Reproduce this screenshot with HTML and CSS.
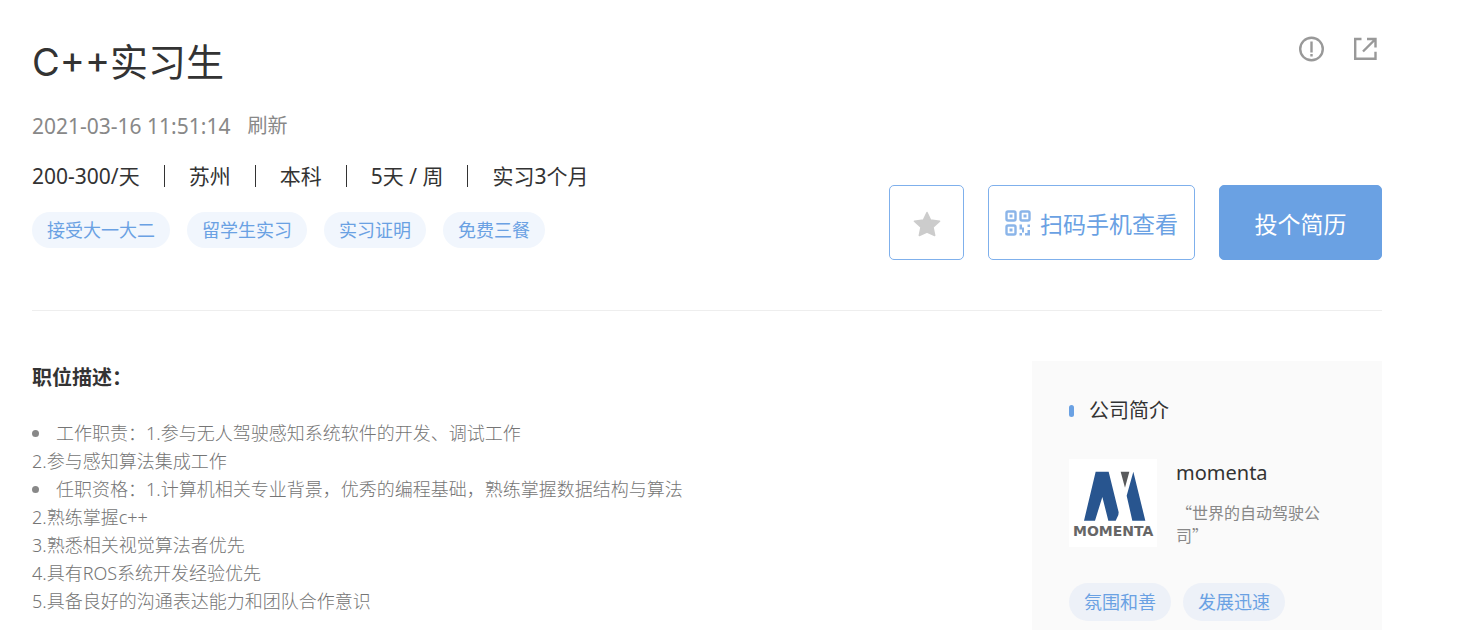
FILE: index.html
```html
<!DOCTYPE html>
<html lang="zh-CN">
<head>
	<meta charset="utf-8">
	<title>C++实习生</title>
	<link rel="stylesheet" href="styles.css">
</head>
<body>
<div class="job">
	<header class="job-header">
		<div class="job-info">
			<h1>C++实习生</h1>
			<div class="job-date"><time>2021-03-16 11:51:14</time><span>刷新</span></div>
			<ul class="job-msg">
				<li>200-300/天</li>
				<li>苏州</li>
				<li>本科</li>
				<li>5天 / 周</li>
				<li>实习3个月</li>
			</ul>
			<ul class="tags">
				<li>接受大一大二</li>
				<li>留学生实习</li>
				<li>实习证明</li>
				<li>免费三餐</li>
			</ul>
		</div>
		<div class="job-side">
			<div class="job-tools">
				<button type="button" class="icon-btn" aria-label="举报">
					<svg width="26" height="26" viewBox="0 0 26 26" fill="none" stroke="#999" stroke-width="2.400">
						<circle cx="13.500" cy="13" r="11.300"/>
						<path d="M13.500 5.500v11M13.500 18v2.500"/>
					</svg>
				</button>
				<button type="button" class="icon-btn" aria-label="分享">
					<svg width="26" height="26" viewBox="0 0 26 26" fill="none" stroke="#999" stroke-width="2.400">
						<path d="M9.500 3H3.200v19.800h20.300v-7M15 3h8.500v8.500M23 3.500L11 15.500"/>
					</svg>
				</button>
			</div>
			<div class="job-actions">
				<button type="button" class="btn btn-star" aria-label="收藏">
					<svg width="28" height="28" viewBox="0 0 28 28" fill="#ccc" stroke="#ccc" stroke-width="1.5" stroke-linejoin="round">
						<path d="M14 3.500l3.600 7.500 9 1.200-6.600 6 1.700 8.300L14 23l-7.700 3.500 1.700-8.300-6.600-6 9-1.200z"/>
					</svg>
				</button>
				<button type="button" class="btn btn-scan">
					<svg width="26" height="26" viewBox="0 0 26 26" fill="#8bb5e9">
						<g fill="none" stroke="#8bb5e9" stroke-width="2.400">
							<rect x="1.500" y="1.500" width="9" height="9" rx="1.500"/>
							<rect x="15.500" y="1.500" width="9" height="9" rx="1.500"/>
							<rect x="1.500" y="15.500" width="9" height="9" rx="1.500"/>
						</g>
						<path d="M4.500 4.500h3v3h-3zM18.500 4.500h3v3h-3zM4.500 18.500h3v3h-3z"/>
						<path d="M14.500 14.500h2.500v3h2v5h-2v-3h-2.500zM22.500 14.500H25V17h-2.500zM14.500 23H17v2.500h-2.500zM22.500 20H25v5.500h-5V23h2.500z"/>
					</svg>
					<span>扫码手机查看</span>
				</button>
				<button type="button" class="btn btn-apply">投个简历</button>
			</div>
		</div>
	</header>

	<main class="job-main">
		<section class="job-detail">
			<h2>职位描述：</h2>
			<ul>
				<li>工作职责：1.参与无人驾驶感知系统软件的开发、调试工作<br>2.参与感知算法集成工作</li>
				<li>任职资格：1.计算机相关专业背景，优秀的编程基础，熟练掌握数据结构与算法<br>2.熟练掌握c++<br>3.熟悉相关视觉算法者优先<br>4.具有ROS系统开发经验优先<br>5.具备良好的沟通表达能力和团队合作意识</li>
			</ul>
		</section>

		<aside class="company">
			<h2>公司简介</h2>
			<div class="company-card">
				<svg class="company-logo" viewBox="0 0 264 264" role="img" aria-label="momenta">
					<rect width="264" height="264" fill="#fff"/>
					<path fill="#28558f" d="M80 38h39l30 122-1 8-8 17h-22l-18-71-22 71H45zM193 38l36 147h-39l-17-75z"/>
					<path fill="#58595b" d="M155 38h26l-13 48z"/>
					<text x="12" y="230">MOMENTA</text>
				</svg>
				<div class="company-text">
					<a href="#">momenta</a>
					<p>“世界的自动驾驶公司”</p>
				</div>
			</div>
			<ul class="tags">
				<li>氛围和善</li>
				<li>发展迅速</li>
			</ul>
		</aside>
	</main>
</div>
</body>
</html>
```
FILE: styles.css
```css
*{margin: 0;padding: 0;box-sizing: border-box;}
body{font-family: "Noto Sans","Noto Sans CJK SC",sans-serif;color: #333;background: #fff;}
ul{list-style: none;}
button{font-family: inherit;cursor: pointer;}
a{color: inherit;text-decoration: none;}

.job{padding: 32px 87px 0 32px;}

/* header */
.job-header{display: flex;justify-content: space-between;padding-bottom: 50px;border-bottom: 1px solid #eee;}
.job-info{padding-bottom: 12px;}
.job-info h1{font-family: Inter,"Noto Sans CJK SC",sans-serif;font-size: 38px;line-height: 60px;font-weight: 400;}
.job-date{display: flex;gap: 17px;margin-top: 19px;font-size: 21px;line-height: 30px;color: #888;}
.job-date span{font-size: 20px;}
.job-msg{display: flex;align-items: center;gap: 24px;margin-top: 20px;font-size: 21px;line-height: 30px;}
.job-msg li{display: flex;align-items: center;gap: 24px;}
.job-msg li + li::before{content: "";width: 1px;height: 22px;background: #333;}
.job-info .tags{margin-top: 21px;}

.tags{display: flex;gap: 17px;}
.tags li{padding: 0 15px;border-radius: 20px;font-size: 18px;line-height: 36px;color: #6aa1e3;background: #f1f6fd;}

.job-side{display: flex;flex-direction: column;justify-content: space-between;align-items: flex-end;}
.job-tools{display: flex;gap: 28px;padding: 4px 4px 0 0;}
.icon-btn{border: 0;background: none;}
.icon-btn svg{display: block;}
.job-actions{display: flex;gap: 24px;}
.btn{display: flex;align-items: center;justify-content: center;height: 75px;border: 1px solid #7fb0ec;border-radius: 5px;font-size: 23px;color: #6aa1e3;background: #fff;}
.btn-star{width: 75px;}
.btn-scan{width: 207px;gap: 9px;}
.btn-apply{width: 163px;border-color: #6aa1e3;color: #fff;background: #6aa1e3;}

/* description */
.job-main{display: flex;justify-content: space-between;align-items: flex-start;padding-top: 50px;}
.job-detail h2{font-size: 20px;line-height: 34px;}
.job-detail ul{margin-top: 24px;font-size: 18px;line-height: 28px;font-weight: 300;color: #757575;}
.job-detail li::before{content: "";display: inline-block;width: 7px;height: 7px;margin-right: 17px;border-radius: 50%;background: #888;vertical-align: 3px;}

/* company */
.company{width: 350px;padding: 35px 37px 9px;background: #fafafa;}
.company h2{display: flex;align-items: center;gap: 15px;font-size: 20px;line-height: 30px;font-weight: 400;}
.company h2::before{content: "";width: 5px;height: 12px;border-radius: 3px;background: #6aa1e3;}
.company-card{display: flex;gap: 19px;margin-top: 33px;}
.company-logo{flex: none;width: 88px;height: 88px;}
.company-logo text{font: bold 42px "DejaVu Sans",sans-serif;fill: #666;}
.company-text a{display: block;font-size: 20px;line-height: 28px;}
.company-text p{margin-top: 14px;padding-right: 12px;font-family: "Noto Sans CJK SC",sans-serif;font-size: 16px;line-height: 23px;color: #888;}
.company .tags{gap: 12px;margin-top: 36px;}
.company .tags li{line-height: 38px;background: #edf1f8;}
```
